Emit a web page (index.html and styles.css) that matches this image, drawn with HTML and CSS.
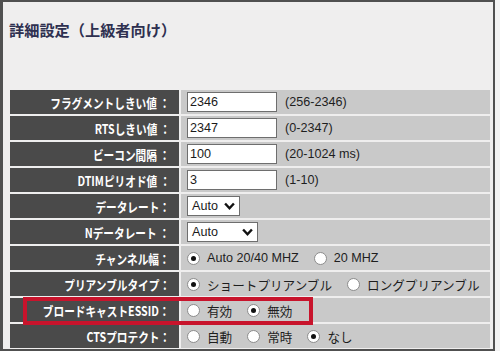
FILE: index.html
```html
<!DOCTYPE html>
<html lang="ja">
<head>
<meta charset="utf-8">
<link rel="stylesheet" href="styles.css">
</head>
<body>
<div class="frame">
  <h1 class="title">詳細設定（上級者向け）</h1>
  <div class="settings">
    <div class="lbl"><span>フラグメントしきい値 ：</span></div>
    <div class="val"><input class="txt" type="text" value="2346"><span class="range">(256-2346)</span></div>

    <div class="lbl"><span>RTSしきい値 ：</span></div>
    <div class="val"><input class="txt" type="text" value="2347"><span class="range">(0-2347)</span></div>

    <div class="lbl"><span>ビーコン間隔 ：</span></div>
    <div class="val"><input class="txt" type="text" value="100"><span class="range">(20-1024 ms)</span></div>

    <div class="lbl"><span>DTIMピリオド値 ：</span></div>
    <div class="val"><input class="txt" type="text" value="3"><span class="range">(1-10)</span></div>

    <div class="lbl"><span>データレート：</span></div>
    <div class="val"><span class="sel sel-s">Auto<svg class="chev" viewBox="0 0 10 7"><path d="M1 1.2 L5 5.5 L9 1.2" /></svg></span></div>

    <div class="lbl"><span>Nデータレート ：</span></div>
    <div class="val"><span class="sel sel-l">Auto<svg class="chev" viewBox="0 0 10 7"><path d="M1 1.2 L5 5.5 L9 1.2" /></svg></span></div>

    <div class="lbl"><span>チャンネル幅：</span></div>
    <div class="val">
      <span class="opt"><span class="radio on"></span>Auto 20/40 MHZ</span>
      <span class="opt"><span class="radio"></span>20 MHZ</span>
    </div>

    <div class="lbl"><span>プリアンブルタイプ：</span></div>
    <div class="val">
      <span class="opt"><span class="radio on"></span>ショートプリアンブル</span>
      <span class="opt"><span class="radio"></span>ロングプリアンブル</span>
    </div>

    <div class="lbl"><span>ブロードキャストESSID：</span></div>
    <div class="val">
      <span class="opt"><span class="radio"></span>有効</span>
      <span class="opt"><span class="radio on"></span>無効</span>
    </div>

    <div class="lbl"><span>CTSプロテクト：</span></div>
    <div class="val">
      <span class="opt"><span class="radio"></span>自動</span>
      <span class="opt"><span class="radio"></span>常時</span>
      <span class="opt"><span class="radio on"></span>なし</span>
    </div>
  </div>
  <div class="highlight"></div>
</div>
</body>
</html>
```
FILE: styles.css
```css
html, body {
  margin: 0;
  padding: 0;
  background: #f3f3f3;
}

body {
  width: 500px;
  height: 351px;
  overflow: hidden;
  font-family: "Liberation Sans", "Noto Sans CJK JP", sans-serif;
}

.frame {
  position: relative;
  box-sizing: border-box;
  width: 495px;
  height: 351px;
  background: #efeeee;
  border-top: 2px solid #505050;
  border-left: 3px solid #505050;
  border-right: 2px solid #505050;
  border-bottom: 2px solid #505050;
}

.title {
  margin: 17px 0 0 6px;
  font-family: "Noto Sans CJK JP", sans-serif;
  font-size: 15.2px;
  line-height: 20px;
  font-weight: 700;
  color: #2e3050;
}

.settings {
  display: grid;
  grid-template-columns: 169px 309px;
  grid-auto-rows: 24px;
  column-gap: 2px;
  row-gap: 2px;
  margin: 51px 0 0 7px;
}

.lbl {
  background: #4a4a4a;
  display: flex;
  align-items: center;
  justify-content: flex-end;
  padding-right: 9px;
  color: #ffffff;
  font-family: "Noto Sans CJK JP", sans-serif;
  font-weight: 700;
  font-size: 13px;
  white-space: nowrap;
}

.lbl span {
  display: inline-block;
  transform: scaleX(0.82);
  transform-origin: right center;
}

.val {
  background: #c9c9c9;
  display: flex;
  align-items: center;
  padding-left: 6px;
  color: #1e1e1e;
  font-size: 12.6px;
  white-space: nowrap;
}

.txt {
  box-sizing: border-box;
  width: 90px;
  height: 20px;
  margin: 0;
  padding: 0 2px;
  border: 1px solid #6e6e6e;
  background: #ffffff;
  font-family: "Liberation Sans", sans-serif;
  font-size: 12.6px;
  color: #1a1a1a;
  outline: none;
}

.range {
  margin-left: 8px;
}

.sel {
  box-sizing: border-box;
  height: 20px;
  display: inline-flex;
  align-items: center;
  justify-content: space-between;
  padding: 0 4px 0 4px;
  border: 1px solid #6e6e6e;
  background: #ffffff;
  color: #1a1a1a;
}

.sel-s { width: 53px; }
.sel-l { width: 71px; }

.chev {
  width: 11px;
  height: 8px;
}

.chev path {
  fill: none;
  stroke: #111111;
  stroke-width: 2.2;
}

.opt {
  display: inline-flex;
  align-items: center;
  margin-right: 15px;
}

.radio {
  box-sizing: border-box;
  width: 13px;
  height: 13px;
  border-radius: 50%;
  border: 1px solid #8c8c8c;
  background: #ffffff;
  margin-right: 7px;
  display: inline-flex;
  align-items: center;
  justify-content: center;
}

.radio.on::after {
  content: "";
  width: 5px;
  height: 5px;
  border-radius: 50%;
  background: #111111;
}

.highlight {
  position: absolute;
  left: 20px;
  top: 295px;
  width: 290px;
  height: 28px;
  box-sizing: border-box;
  border: 4px solid #c8142c;
}
```
